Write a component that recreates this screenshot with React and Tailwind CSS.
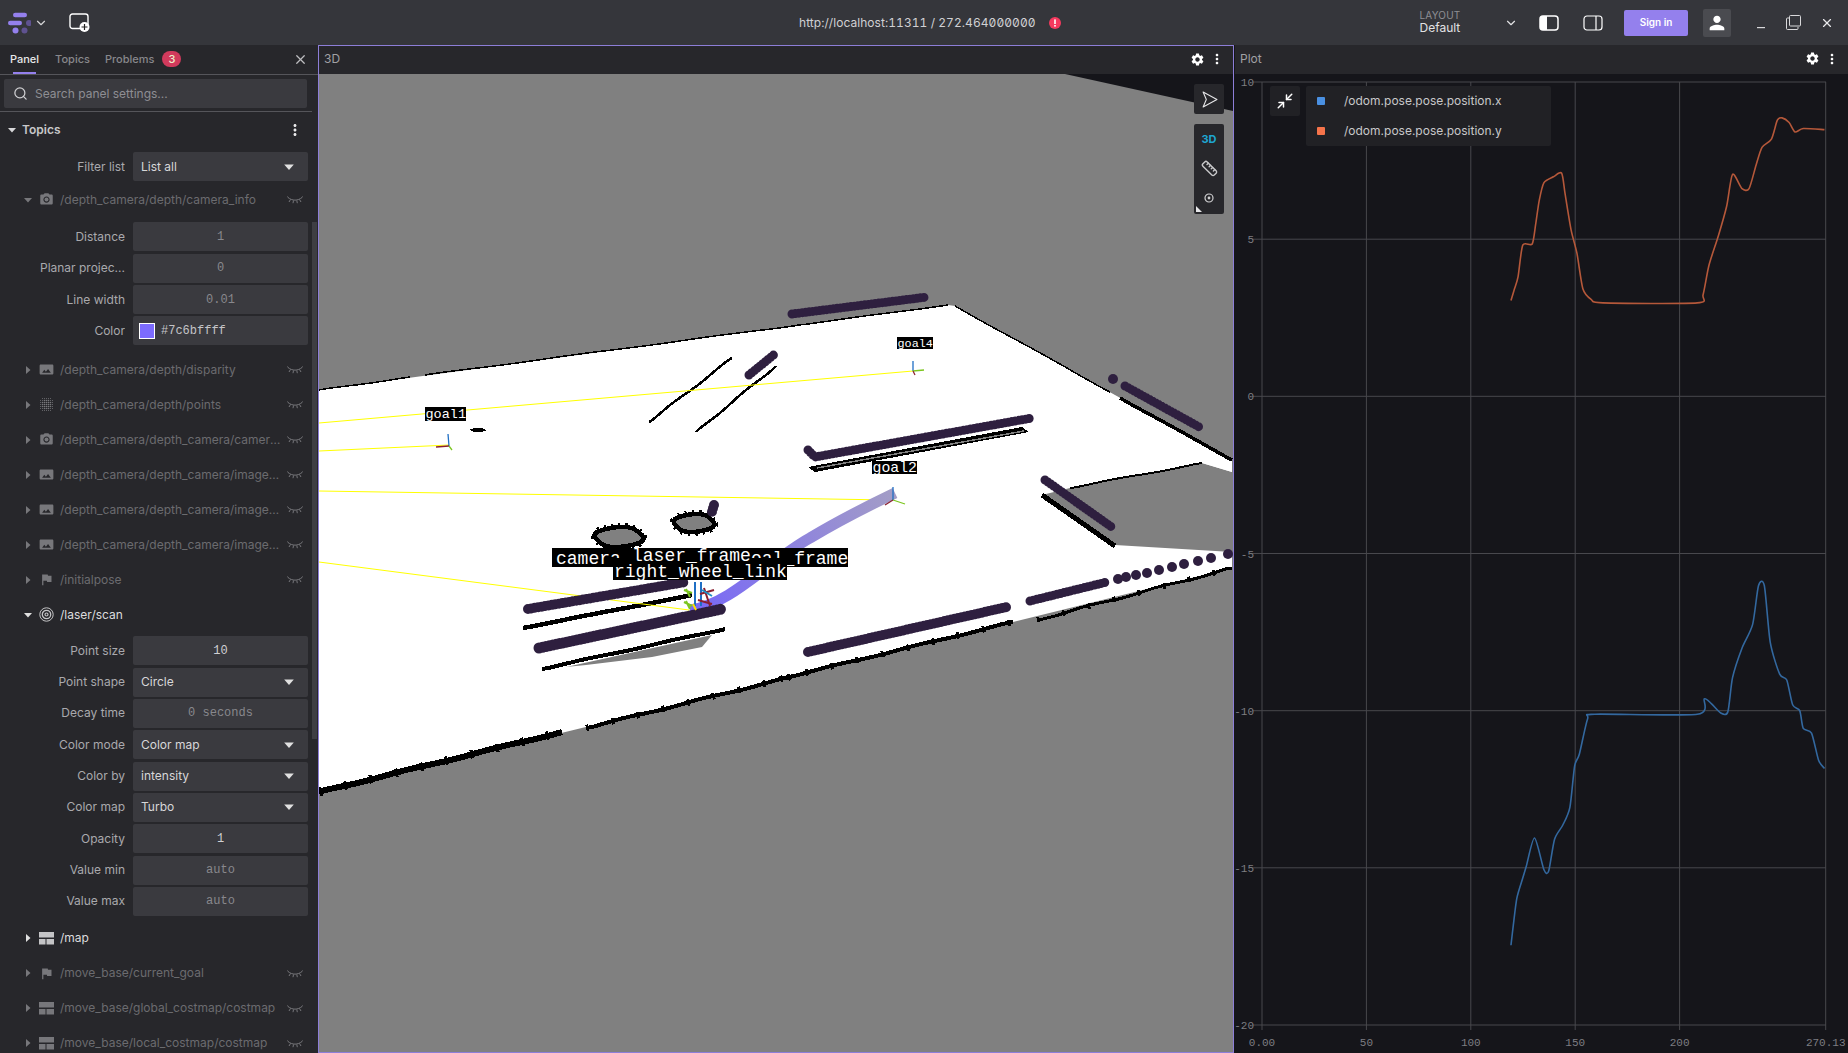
import { X, Search, ChevronDown, Ruler, Minimize2 } from "lucide-react";
import { MdPhotoCamera, MdPanorama, MdFlag, MdSettings, MdMoreVert, MdPerson } from "react-icons/md";

const S = 1.1786;

const orangeLine = [[1282,255],[1285,245],[1288,235],[1292,208],[1300,207],[1303,190],[1306,170],[1310,155],[1318,150],[1325,147],[1328,165],[1333,195],[1338,215],[1343,245],[1350,254],[1360,257],[1440,257],[1445,250],[1450,225],[1458,200],[1465,175],[1470,148],[1478,160],[1484,160],[1490,140],[1495,125],[1503,118],[1508,102],[1512,100],[1518,104],[1523,112],[1530,109],[1548,110]];
const blueLine = [[1282,802],[1284,785],[1287,762],[1292,745],[1295,735],[1302,711],[1310,738],[1314,739],[1319,712],[1326,700],[1332,685],[1336,650],[1340,640],[1347,610],[1353,606],[1440,606],[1446,593],[1452,597],[1460,605],[1466,604],[1470,575],[1478,550],[1487,530],[1492,497],[1497,497],[1502,545],[1510,572],[1516,577],[1521,598],[1527,603],[1530,618],[1537,622],[1543,645],[1548,652]];

// smooth curve through the samples
const toPath = (line) => {
  const p = line.map(([x, y]) => [x * S, y * S]);
  let d = `M${p[0][0]} ${p[0][1]}`;
  for (let i = 0; i < p.length - 1; i++) {
    const a = p[i - 1] || p[i];
    const b = p[i];
    const c = p[i + 1];
    const e = p[i + 2] || c;
    d += ` C${b[0] + (c[0] - a[0]) / 8} ${b[1] + (c[1] - a[1]) / 8} ${c[0] - (e[0] - b[0]) / 8} ${c[1] - (e[1] - b[1]) / 8} ${c[0]} ${c[1]}`;
  }
  return d;
};

// rough edge for the map walls, same result on every run
const jag = (x1, y1, x2, y2, n, amp) => {
  const pts = [];
  const len = Math.hypot(x2 - x1, y2 - y1);
  for (let i = 0; i <= n; i++) {
    const t = i / n;
    const off = i === 0 || i === n ? 0 : Math.sin(i * 12.9898 + x1) * amp;
    pts.push(`${x1 + (x2 - x1) * t - ((y2 - y1) / len) * off},${y1 + (y2 - y1) * t + ((x2 - x1) / len) * off}`);
  }
  return pts.join(" ");
};

const blob = (cx, cy, rx, ry) => {
  const pts = [];
  for (let i = 0; i < 30; i++) {
    const a = (i / 30) * Math.PI * 2;
    const k = 1 + Math.sin(i * 7.13) * 0.05;
    pts.push(`${cx + Math.cos(a) * rx * k},${cy + Math.sin(a) * ry * k}`);
  }
  return pts.join(" ");
};

const scanLines = [
  [792,314,927,297,9],[749,375,776,353,9],[714,505,711,515,10],[528,609,686,582,10],[539,648,722,609,11],
  [808,652,1007,607,10],[1030,601,1107,582,9],[1125,386,1201,428,9],[1045,480,1113,528,9],
];
const scanDots = [[1118,579],[1126,577],[1136,575],[1147,573],[1159,570],[1172,567],[1184,564],[1198,561],[1211,558],[1228,554],[1113,379]];
const walls = [
  [319,792,562,732,6,40,0.5,true],[586,728,799,675,4,40,0.6,true],[780,679,1013,622,4,40,0.5,true],[1037,620,1232,568,3,40,0.8,true],
  [649,422,732,358,2.5,24,0.6],[696,432,776,366,2.5,24,0.6],[523,628,692,595,4.5,20,0.2],[542,669,725,629,4,30,0.4],
  [1042,495,1115,546,5,8,0],[1070,488,1202,463,2,20,0.5],[319,390,410,377,1.5,12,0.4],[425,375,799,325,1.5,40,0.3],
  [799,325,948,305,1.5,20,0.2],[955,306,1110,392,1.5,20,0.3],[1120,398,1232,460,3.5,14,0.2],
];

function Camera3D() {
  return (
    <svg viewBox="319 74 914 978" className="w-full h-full block">
      <defs>
        <linearGradient id="trail" gradientUnits="userSpaceOnUse" x1="700" y1="600" x2="895" y2="495">
          <stop offset="0" stopColor="#7a6af5" />
          <stop offset="1" stopColor="#a39dc6" />
        </linearGradient>
      </defs>
      <rect x="319" y="74" width="914" height="978" fill="#808080" />
      <polygon points="1065,74 1233,74 1233,111" fill="#15151a" />
      <polygon points="319,390 948,305 955,306 1232,460 1232,568 1013,622 799,675 319,792" fill="#ffffff" />
      <polygon points="1070,488 1202,463 1232,472 1232,552 1115,545 1042,495" fill="#808080" />
      <polygon points="1202,463 1232,460 1232,472" fill="#ffffff" />
      <polygon points="566,667 712,635 702,647 652,657 586,665" fill="#808080" />

      <g shapeRendering="crispEdges">
        {walls.map(([x1, y1, x2, y2, w, n, amp, rough], i) => (
          <g key={i}>
            <polyline points={jag(x1, y1, x2, y2, n, amp)} fill="none" stroke="#000" strokeWidth={w} />
            {rough && <line x1={x1} y1={y1} x2={x2} y2={y2} stroke="#000" strokeWidth={w + 2.5} strokeDasharray="3 23" />}
          </g>
        ))}
        <polygon points="808,467 1022,427 1029,432 815,472" fill="#000" />
        <line x1="817" y1="468" x2="1024" y2="431" stroke="#808080" strokeWidth="1.5" />
        <polygon points={blob(478, 430, 8, 2)} fill="#000" />
        <polygon points={blob(619, 537, 24, 10)} fill="none" stroke="#000" strokeWidth="8" strokeDasharray="2 5" />
        <polygon points={blob(694, 523, 20, 9)} fill="none" stroke="#000" strokeWidth="8" strokeDasharray="2 5" />
        <polygon points={blob(619, 537, 24, 10)} fill="#808080" stroke="#000" strokeWidth="4.5" />
        <polygon points={blob(694, 523, 20, 9)} fill="#808080" stroke="#000" strokeWidth="4.5" />
      </g>

      <g stroke="#ffff00" strokeWidth="1" fill="none">
        <line x1="319" y1="423" x2="913" y2="371" />
        <line x1="319" y1="451" x2="449" y2="445" />
        <line x1="319" y1="491" x2="890" y2="500" />
        <line x1="319" y1="562" x2="689" y2="610" />
      </g>

      <path d="M690 610 C730 605 770 560 810 538 C840 520 870 505 895 493" fill="none" stroke="url(#trail)" strokeWidth="11" />

      <g stroke="#2e1f3f" strokeLinecap="round" fill="none">
        {scanLines.map(([x1, y1, x2, y2, w], i) => (
          <line key={i} x1={x1} y1={y1} x2={x2} y2={y2} strokeWidth={w} strokeDasharray="0 3.5" />
        ))}
        <polyline points="808,450 815,457 1032,418" strokeWidth="9" strokeDasharray="0 3.5" />
      </g>
      {scanDots.map(([cx, cy], i) => (
        <circle key={i} cx={cx} cy={cy} r="5" fill="#2e1f3f" />
      ))}

      <g strokeWidth="1.3" fill="none">
        <path d="M449 446 L448 434" stroke="#1f6fc4" />
        <path d="M449 446 L436 447" stroke="#8a2030" />
        <path d="M449 446 L452 450" stroke="#7cc61f" />
        <path d="M913 371 L913 361" stroke="#1f6fc4" />
        <path d="M913 371 L924 370" stroke="#7cc61f" />
        <path d="M913 371 L915 375" stroke="#8a2030" />
        <path d="M893 500 L893 487" stroke="#1f6fc4" />
        <path d="M893 500 L905 504" stroke="#7cc61f" />
        <path d="M893 500 L885 505" stroke="#8a2030" />
      </g>
      <g strokeWidth="2" fill="none">
        <path d="M684 590 L692 593 M684 602 L692 606 M686 589 L690 597 M686 601 L690 609" stroke="#7cc61f" />
        <path d="M695 582 L695 606 M701 582 L701 606" stroke="#1f6fc4" />
        <path d="M700 594 L714 590 M698 600 L712 604 M704 588 L710 606" stroke="#8a2030" />
        <path d="M702 590 L712 596" stroke="#1f8fc4" />
        <path d="M693 604 L696 610" stroke="#ffe000" />
      </g>

      <g className="font-['Liberation_Mono',monospace]" fill="#fff">
        <rect x="425" y="407" width="41" height="14" fill="#000" />
        <text x="425.5" y="418" fontSize="13.5">goal1</text>
        <rect x="897" y="337" width="36" height="12" fill="#000" />
        <text x="897.5" y="347" fontSize="11.8">goal4</text>
        <rect x="872" y="461" width="45" height="13" fill="#000" />
        <text x="872.5" y="472" fontSize="14.8">goal2</text>

        <rect x="552" y="548" width="296" height="19" fill="#000" />
        <text x="556" y="564" fontSize="18">camera</text>
        <text x="751" y="564" fontSize="18">oal_frame</text>
        <rect x="606" y="558" width="179" height="9" fill="#000" />
        <text x="632" y="561" fontSize="18">laser_frame</text>
        <rect x="613" y="565" width="174" height="15" fill="#000" />
        <text x="614" y="577" fontSize="18">right_wheel_link</text>
      </g>
    </svg>
  );
}

function PlotChart() {
  const xs = [1262, 1366.4, 1470.8, 1575.2, 1679.6, 1825.7];
  const ys = [82, 239.2, 396.3, 553.5, 710.7, 867.8, 1025];
  const yLabels = ["10", "5", "0", "-5", "-10", "-15", "-20"];
  const xLabels = ["0.00", "50", "100", "150", "200", "270.13"];
  return (
    <svg viewBox="1235 74 613 979" className="w-full h-full block">
      <rect x="1235" y="74" width="613" height="979" fill="#15151a" />
      <g stroke="#48484d" strokeWidth="1">
        {xs.map((x) => (
          <line key={x} x1={x} y1="82" x2={x} y2="1030" />
        ))}
        {ys.map((y) => (
          <line key={y} x1="1252" y1={y} x2="1826" y2={y} />
        ))}
      </g>
      <path d={toPath(orangeLine)} fill="none" stroke="#b5583a" strokeWidth="1.6" />
      <path d={toPath(blueLine)} fill="none" stroke="#33689f" strokeWidth="1.6" />
      <g className="font-['Liberation_Mono',monospace]" fontSize="11" fill="#7d7d82">
        {yLabels.map((t, i) => (
          <text key={t} x="1254" y={ys[i] + 4} textAnchor="end">{t}</text>
        ))}
        {xLabels.map((t, i) => (
          <text key={t} x={xs[i]} y="1046" textAnchor="middle">{t}</text>
        ))}
      </g>
    </svg>
  );
}

function Logo() {
  return (
    <svg width="24" height="24" viewBox="0 0 24 24">
      <path d="M8.3 4h9.4M3.3 12h9.4" stroke="#9480ed" strokeWidth="4.6" strokeLinecap="round" />
      <circle cx="22" cy="12" r="3" fill="#5f5290" />
      <circle cx="8.5" cy="19.5" r="3" fill="#9480ed" />
      <circle cx="17.5" cy="19.5" r="3" fill="#5f5290" />
    </svg>
  );
}

function AddPanelIcon() {
  return (
    <svg width="22" height="20" viewBox="0 0 22 20">
      <rect x="1" y="1" width="18" height="14.5" rx="2.5" fill="none" stroke="#fff" strokeWidth="1.4" />
      <circle cx="15.5" cy="14" r="5" fill="#fff" />
      <path d="M15.5 11v6M12.5 14h6" stroke="#222" strokeWidth="1.2" />
    </svg>
  );
}

function Caret({ open, className }) {
  return (
    <svg width="10" height="10" viewBox="0 0 10 10" className={className}>
      {open ? <polygon points="1,3 9,3 5,7.5" fill="currentColor" /> : <polygon points="3,1 7.5,5 3,9" fill="currentColor" />}
    </svg>
  );
}

function EyeOff() {
  return (
    <svg width="16" height="9" viewBox="0 0 16 9" className="text-[#77777b]">
      <path d="M1 2.5C5 6 11 6 15 2.5M3.5 4.5 2 7M6.5 5.5 6 8.2M9.8 5.5 10.3 8.2M12.5 4.5 14 7M1 2.5 .5 1.5M15 2.5 15.5 1.5" fill="none" stroke="currentColor" strokeWidth="1" />
    </svg>
  );
}

function PointsIcon() {
  const dots = [];
  for (let i = 0; i < 7; i++) {
    for (let j = 0; j < 7; j++) {
      const d = Math.hypot(i - 3, j - 3);
      if (d < 3.7) dots.push(<circle key={`${i}-${j}`} cx={1.5 + i * 2} cy={1.5 + j * 2} r={d < 2.3 ? 0.8 : 0.5} fill="currentColor" />);
    }
  }
  return <svg width="15" height="15" viewBox="0 0 15 15">{dots}</svg>;
}

function ScanIcon() {
  return (
    <svg width="15" height="15" viewBox="0 0 15 15" fill="none" stroke="currentColor">
      <circle cx="7.5" cy="7.5" r="6.7" strokeWidth="1" />
      <circle cx="7.5" cy="7.5" r="4.2" strokeWidth="1.3" />
      <circle cx="7.5" cy="7.5" r="1.5" strokeWidth="1.2" />
    </svg>
  );
}

function MapIcon() {
  return (
    <svg width="15" height="13" viewBox="0 0 15 13" fill="currentColor">
      <rect x="0" y="0" width="15" height="5.5" />
      <rect x="0" y="7" width="6.5" height="5.5" />
      <rect x="7.5" y="7" width="7.5" height="5.5" />
    </svg>
  );
}

const icons = {
  camera: <MdPhotoCamera size={19} />,
  image: <MdPanorama size={19} />,
  flag: <MdFlag size={19} />,
  points: <PointsIcon />,
  scan: <ScanIcon />,
  map: <MapIcon />,
};

function TopicRow({ icon, name, open, active }) {
  return (
    <div className={`h-[35px] flex items-center pl-[23px] pr-[15px] ${active ? "text-[#dcdcde]" : "text-[#6b6b6f]"}`}>
      <Caret open={open} className={active ? "text-[#e0e0e0]" : "text-[#77777b]"} />
      <div className={`w-[15px] ml-[6px] flex justify-center ${active ? "text-[#c4c4c6]" : "text-[#77777b]"}`}>{icons[icon]}</div>
      <div className="ml-[6px] w-[222px] truncate text-[12px]">{name}</div>
      {!active && <div className="ml-auto"><EyeOff /></div>}
    </div>
  );
}

function Field({ label, children }) {
  return (
    <div className="h-[31.33px] flex items-center pl-[4px] pr-[10px]">
      <div className="w-[121px] text-right text-[#a9a9ad] text-[12px] truncate">{label}</div>
      <div className="ml-[8px] flex-1 h-[29px] bg-[#3a3a3f] rounded-[2px] flex items-center text-[12px] text-[#d7d7d9]">{children}</div>
    </div>
  );
}

function NumberField({ label, value, bright }) {
  return (
    <Field label={label}>
      <div className={`w-full text-center font-['Liberation_Mono',monospace] text-[12px] ${bright ? "text-[#d0d0d3]" : "text-[#88888d]"}`}>{value}</div>
    </Field>
  );
}

function SelectField({ label, value }) {
  return (
    <Field label={label}>
      <span className="pl-[8px]">{value}</span>
      <Caret open className="ml-auto mr-[13px] w-[12px] h-[12px] text-[#e0e0e0]" />
    </Field>
  );
}

function Sidebar() {
  return (
    <div className="relative w-[318px] shrink-0 bg-[#27272b] overflow-hidden">
      <div className="h-[30px] pb-[1px] border-b border-[#55555a] flex items-center text-[11px] font-medium text-[#88888c] pr-[10px]">
        <div className="relative ml-[10px] text-[#e8e8ea] h-full flex items-center">
          Panel
          <div className="absolute bottom-[-1px] left-[3px] w-[23px] h-[2px] bg-[#9480ed]" />
        </div>
        <div className="ml-[16px]">Topics</div>
        <div className="ml-[15px]">Problems</div>
        <div className="ml-[8px] w-[19px] h-[16px] rounded-full bg-[#d13a5c] text-[#eec] text-[11px] flex items-center justify-center">3</div>
        <X size={15} className="ml-auto text-[#bdbdc0]" />
      </div>
      <div className="w-[312px] border-b border-[#55555a] h-[37px] pt-[4px] px-[4px]">
        <div className="h-[29px] w-[303px] bg-[#3a3a3f] rounded-[2px] flex items-center pl-[9px] text-[12px] text-[#8e8e93]">
          <Search size={15} className="text-[#d0d0d3]" />
          <span className="ml-[7px]">Search panel settings...</span>
        </div>
      </div>

      <div className="h-[35px] flex items-center pl-[7px] pr-[14px]">
        <Caret open className="text-[#d8d8da]" />
        <span className="ml-[5px] text-[12px] font-semibold text-[#c8c8ca]">Topics</span>
        <MdMoreVert size={18} className="ml-auto text-[#e8e8ea]" />
      </div>
      <div className="pt-[4px]">
        <SelectField label="Filter list" value="List all" />
      </div>
      <TopicRow icon="camera" name="/depth_camera/depth/camera_info" open />
      <div className="pt-[4px]">
        <NumberField label="Distance" value="1" />
        <NumberField label="Planar projec..." value="0" />
        <NumberField label="Line width" value="0.01" />
        <Field label="Color">
          <div className="ml-[6px] w-[16px] h-[16px] bg-[#7c6bff] border border-white" />
          <span className="ml-[6px] font-['Liberation_Mono',monospace] text-[12px] text-[#c4c4c7]">#7c6bffff</span>
        </Field>
      </div>
      <div className="pt-[5.5px]">
        <TopicRow icon="image" name="/depth_camera/depth/disparity" />
        <TopicRow icon="points" name="/depth_camera/depth/points" />
        <TopicRow icon="camera" name="/depth_camera/depth_camera/camera_info" />
        <TopicRow icon="image" name="/depth_camera/depth_camera/image_raw" />
        <TopicRow icon="image" name="/depth_camera/depth_camera/image_raw/compressed" />
        <TopicRow icon="image" name="/depth_camera/depth_camera/image_raw/theora" />
        <TopicRow icon="flag" name="/initialpose" />
        <TopicRow icon="scan" name="/laser/scan" open active />
      </div>
      <div className="pt-[3px]">
        <NumberField label="Point size" value="10" bright />
        <SelectField label="Point shape" value="Circle" />
        <NumberField label="Decay time" value="0 seconds" />
        <SelectField label="Color mode" value="Color map" />
        <SelectField label="Color by" value="intensity" />
        <SelectField label="Color map" value="Turbo" />
        <NumberField label="Opacity" value="1" bright />
        <NumberField label="Value min" value="auto" />
        <NumberField label="Value max" value="auto" />
      </div>
      <div className="pt-[3.5px]">
        <TopicRow icon="map" name="/map" active />
        <TopicRow icon="flag" name="/move_base/current_goal" />
        <TopicRow icon="map" name="/move_base/global_costmap/costmap" />
        <TopicRow icon="map" name="/move_base/local_costmap/costmap" />
      </div>
      <div className="absolute right-[1px] top-[177px] w-[5px] h-[517px] bg-[#3e3e43]" />
    </div>
  );
}

function PanelHeader({ title, height }) {
  return (
    <div className={`${height} shrink-0 pb-[2px] bg-[#27272b] flex items-center pl-[5px] pr-[8px] text-[12px] text-[#a0a0a4]`}>
      {title}
      <MdSettings size={15} className="ml-auto text-white" />
      <MdMoreVert size={16} className="ml-[4px] text-white" />
    </div>
  );
}

export default function App() {
  return (
    <div className="w-[1848px] h-[1053px] overflow-hidden flex flex-col bg-[#15151a] font-['Inter',sans-serif]">
      <div className="h-[45px] shrink-0 bg-[#35363b] flex items-center relative">
        <div className="ml-[7px] flex items-center text-[#d4d4d6]">
          <Logo />
          <ChevronDown size={14} className="ml-[3px]" />
        </div>
        <div className="ml-[21px] mt-[1px]"><AddPanelIcon /></div>
        <div className="absolute left-[799px] top-[14px] flex items-center text-[12px] tracking-[0.05px] text-[#d0d0d3] [font-feature-settings:'tnum','zero']">
          <span>http://localhost:11311 / 272.464000000</span>
          <svg width="12" height="12" viewBox="0 0 12 12" className="ml-[13px]">
            <circle cx="6" cy="6" r="6" fill="#f4395e" />
            <rect x="5.2" y="2.4" width="1.6" height="4.6" fill="#fff" />
            <rect x="5.2" y="8" width="1.6" height="1.6" fill="#fff" />
          </svg>
        </div>
        <div className="ml-auto flex items-center">
          <div className="w-[84px] leading-none mb-[2px]">
            <div className="text-[10px] text-[#8f8f94] tracking-[0.2px]">LAYOUT</div>
            <div className="text-[12px] mt-[2px] text-[#e2e2e4]">Default</div>
          </div>
          <ChevronDown size={14} className="text-[#e2e2e4]" />
          <svg width="20" height="16" viewBox="0 0 20 16" className="ml-[21.5px]">
            <rect x="1" y="1" width="18" height="14" rx="3" fill="none" stroke="#fff" strokeWidth="1.5" />
            <path d="M4 1h4v14H4a3 3 0 0 1-3-3V4a3 3 0 0 1 3-3z" fill="#fff" />
          </svg>
          <svg width="20" height="16" viewBox="0 0 20 16" className="ml-[24px]">
            <rect x="1" y="1" width="18" height="14" rx="3" fill="none" stroke="#fff" strokeWidth="1.2" />
            <line x1="13" y1="1" x2="13" y2="15" stroke="#fff" strokeWidth="1.2" />
          </svg>
          <div className="ml-[21px] w-[64px] h-[26px] bg-[#9480ed] rounded-[2px] text-white text-[10px] font-semibold flex items-center justify-center">Sign in</div>
          <div className="ml-[15px] w-[28px] h-[28px] bg-[#4a4b50] rounded-[2px] flex items-center justify-center text-white">
            <MdPerson size={22} />
          </div>
          <svg width="8" height="2" viewBox="0 0 8 2" className="ml-[26px] mt-[10px]"><rect width="8" height="1.2" fill="#d8d8da" /></svg>
          <svg width="15" height="15" viewBox="0 0 15 15" className="ml-[21px]" fill="none" stroke="#d8d8da" strokeWidth="1">
            <rect x="3.5" y=".5" width="11" height="10.5" rx="1" />
            <path d="M3 3H1.5a1 1 0 0 0-1 1v9.5a1 1 0 0 0 1 1H11a1 1 0 0 0 1-1V12" />
          </svg>
          <X size={14} className="ml-[19px] mr-[14px] text-[#e8e8ea]" />
        </div>
      </div>
      <div className="flex-1 flex min-h-0">
        <Sidebar />
        <div className="w-[916px] shrink-0 border border-[#8d7ed8] flex flex-col">
          <PanelHeader title="3D" height="h-[28px]" />
          <div className="relative flex-1 min-h-0">
            <Camera3D />
            <div className="absolute left-[875px] top-[10px] w-[30px] h-[30px] bg-[#27272b] rounded-[2px] flex items-center justify-center">
              <svg width="17" height="17" viewBox="0 0 16 16">
                <path d="M2 1 15 8 2 15 5 8Z" fill="none" stroke="#e8e8ea" strokeWidth="1" strokeLinejoin="round" />
              </svg>
            </div>
            <div className="absolute left-[875px] top-[50px] w-[30px] h-[90px] bg-[#27272b] rounded-[2px] flex flex-col items-center pt-[8px]">
              <div className="h-[14px] text-[11px] font-bold text-[#1ea5d0] leading-[14px]">3D</div>
              <Ruler size={17} className="mt-[14px] text-[#c8c8ca]" />
              <svg width="10" height="10" viewBox="0 0 10 10" className="mt-[16px]" fill="none" stroke="#d0d0d2">
                <circle cx="5" cy="5" r="4" strokeWidth="1.2" />
                <circle cx="5" cy="5" r="1.4" fill="#d0d0d2" strokeWidth="0" />
              </svg>
              <svg width="6" height="6" viewBox="0 0 6 6" className="absolute left-[2px] bottom-[2px]">
                <polygon points="0,0 6,6 0,6" fill="#e8e8ea" />
              </svg>
            </div>
          </div>
        </div>
        <div className="flex-1 flex flex-col ml-[1px] min-w-0">
          <PanelHeader title="Plot" height="h-[29px]" />
          <div className="relative flex-1 min-h-0">
            <PlotChart />
            <div className="absolute left-[35px] top-[12px] w-[30px] h-[30px] bg-[#212125] rounded-[2px] flex items-center justify-center text-white">
              <Minimize2 size={18} />
            </div>
            <div className="absolute left-[71px] top-[12px] w-[245px] h-[60px] bg-[#212125] rounded-[2px] text-[12px] text-[#c8c8ca]">
              <div className="h-[30px] flex items-center pl-[11px]">
                <div className="w-[8px] h-[8px] rounded-[1px] bg-[#4a90e2]" />
                <span className="ml-[19px]">/odom.pose.pose.position.x</span>
              </div>
              <div className="h-[30px] flex items-center pl-[11px]">
                <div className="w-[8px] h-[8px] rounded-[1px] bg-[#f5734a]" />
                <span className="ml-[19px]">/odom.pose.pose.position.y</span>
              </div>
            </div>
          </div>
        </div>
      </div>
    </div>
  );
}
